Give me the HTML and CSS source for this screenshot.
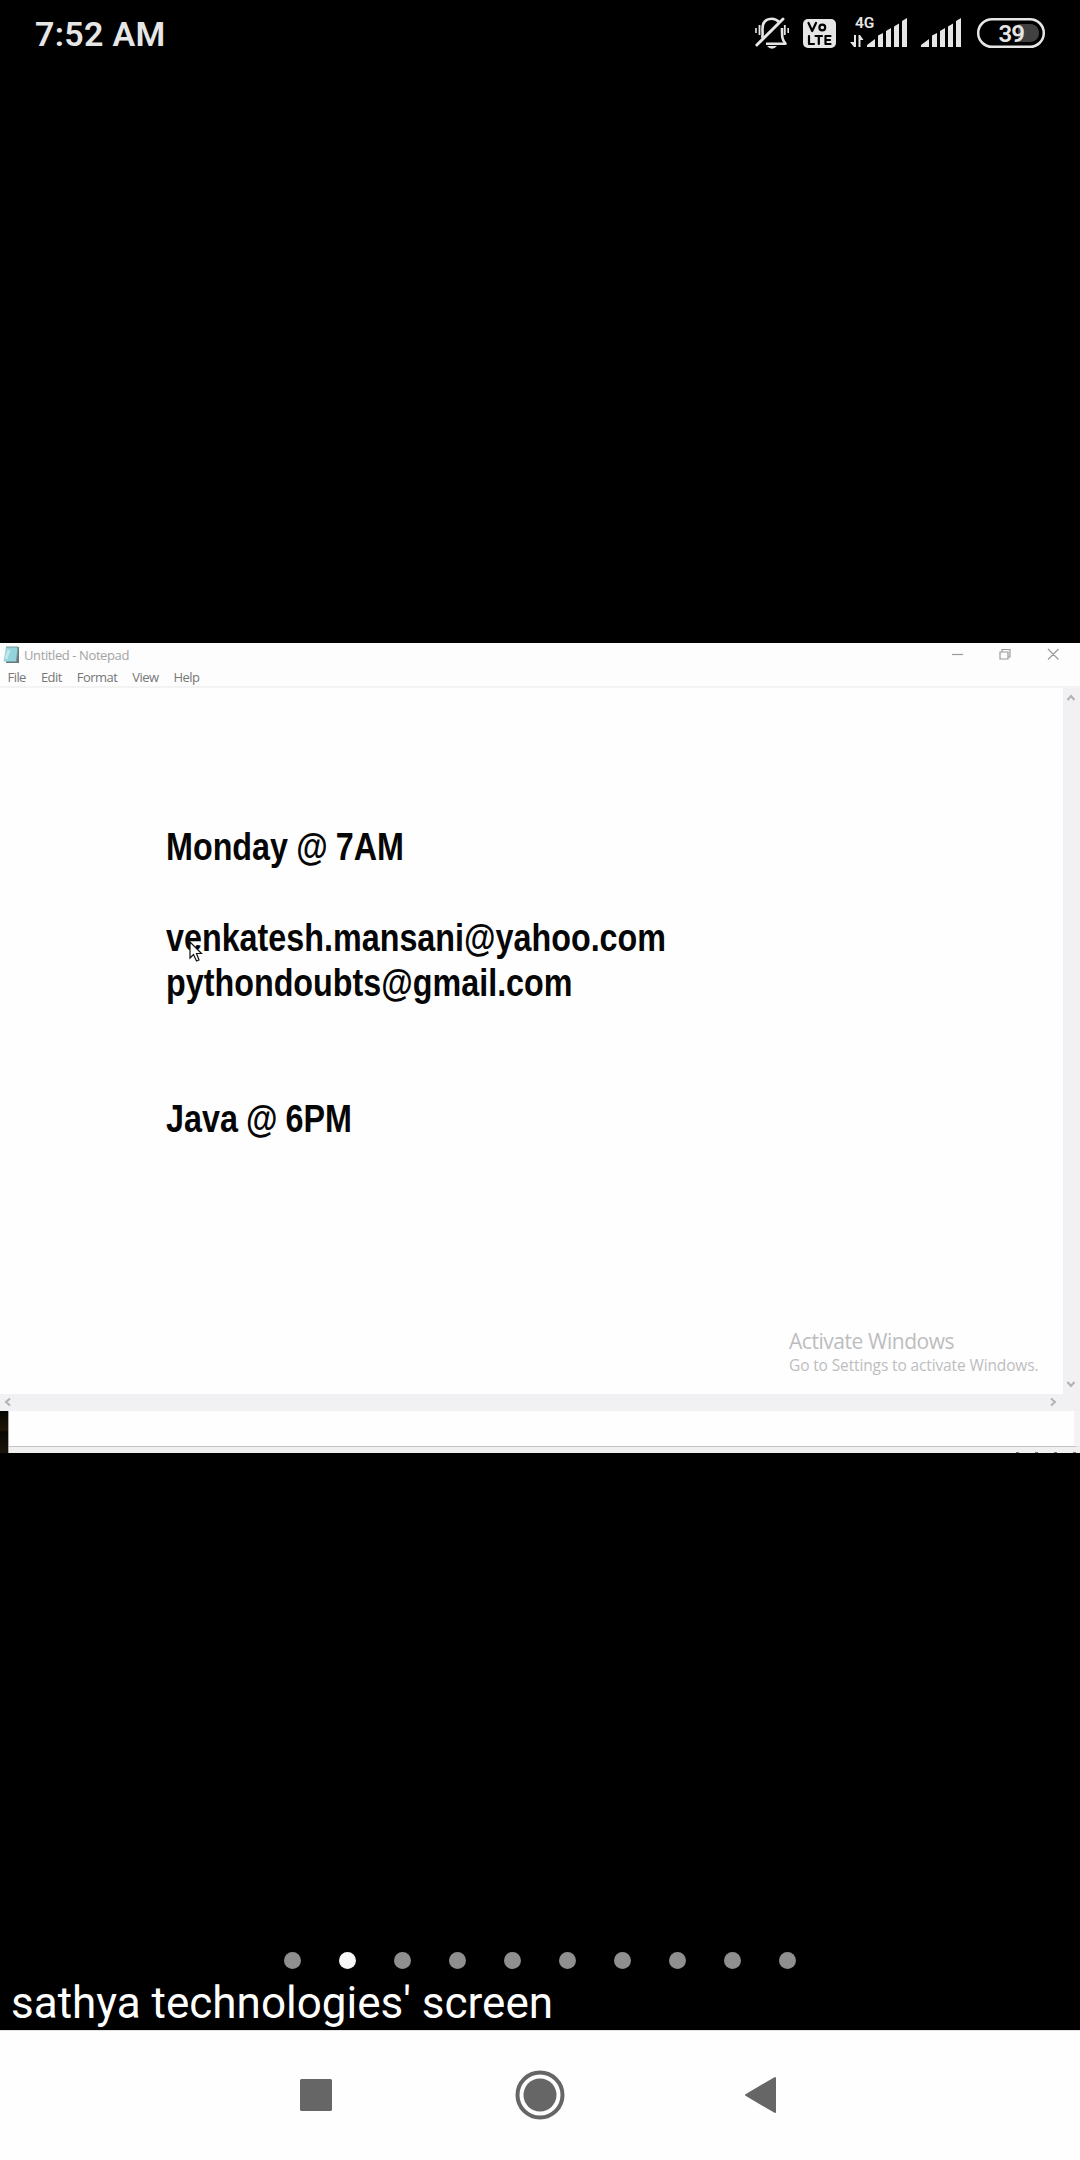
FILE: index.html
```html
<!DOCTYPE html>
<html lang="en">
<head>
<meta charset="utf-8">
<title>Screen share</title>
<link rel="stylesheet" href="styles.css">
</head>
<body>
<div class="phone">
  <header class="status">
    <span class="time">7:52 AM</span>
    <svg class="status-icons" width="300" height="50" viewBox="750 10 300 50" fill="#e6e6e6">
      <g fill="none" stroke="#e6e6e6" stroke-width="2.600">
        <path d="M762 38C763 36 762.500 33 762.500 29C762.500 22.500 766 18.800 772 18.800C775 18.800 777 20 779 22M766 43.700H785.500C782 40 782 37 782 28" stroke-linejoin="round"/>
        <path d="M756.800 45L783 19" stroke-width="2.900" stroke-linecap="round"/>
        <path d="M759.500 25V35M784.800 25V35" stroke-width="1.800"/>
        <path d="M756 28V33M788.200 28V33" stroke-width="1.600"/>
      </g>
      <path d="M767 46H777Q772 51.500 767 46Z"/>
      <rect x="803" y="19" width="33" height="29" rx="5"/>
      <g fill="none" stroke="#000" stroke-width="2.200" stroke-linecap="round" stroke-linejoin="round">
        <path d="M808.500 23L812.200 31L816 23"/><circle cx="822.300" cy="27.500" r="2.900"/>
        <path d="M809 36V44H814M815.500 36H822M818.800 36V44M830.500 36H825.500V44H830.500M825.500 40H830"/>
      </g>
      <text class="network" x="855" y="28">4G</text>
      <path d="M854 35H856V47H854L850 42H854ZM858.500 47V35H860L863.500 40H860.500V47Z"/>
      <g id="bars"><path d="M867 47V45L875 39V47ZM878 47V35.500L883 33V47ZM886 47V31L891 28V47ZM894 47V26.500L899 23.500V47ZM902 47V21L907 18V47Z"/></g>
      <use href="#bars" x="54"/>
      <path d="M1018 24H1030C1042 24 1042 42 1030 42H1018Z" fill="#414141"/>
      <rect x="978.200" y="19.200" width="65.600" height="27.600" rx="13.800" fill="none" stroke="#e6e6e6" stroke-width="2.500"/>
      <text class="charge" x="998.500" y="41.500">39</text>
    </svg>
  </header>

  <main class="share">
    <div class="titlebar">
      <svg width="18" height="20" viewBox="0 0 18 20"><path d="M6 2H17V18H4Z" fill="#68777a"/><path d="M4 2H16L14.500 16.500H1.500Z" fill="#94d3db"/><path d="M4 2H16M16 2L14.500 16" stroke="#77969c" fill="none"/><path d="M7 5L4 14" stroke="#c2e7ea" stroke-width="3"/></svg>
      <span class="caption">Untitled - Notepad</span>
      <svg class="window-buttons" width="112" height="14" viewBox="0 0 112 14" fill="none" stroke="#9b9b9b" stroke-width="1.200"><path d="M2 7.500H13" /><path d="M50 5H58V12H50ZM52 5V2.500H60V10H58M98 2L108.500 12.500M108.500 2L98 12.500"/></svg>
    </div>
    <nav class="menu"><span>File</span><span>Edit</span><span>Format</span><span>View</span><span>Help</span></nav>
    <div class="editor">
      <div class="page">
        <pre class="note">Monday @ 7AM

venkatesh.mansani@yahoo.com
pythondoubts@gmail.com


Java @ 6PM</pre>
        <div class="activate"><div class="activate-title">Activate Windows</div><div class="activate-hint">Go to Settings to activate Windows.</div></div>
        <svg class="cursor" width="14" height="22" viewBox="0 0 14 22"><path d="M1 1V17L4.500 13.500L7.500 20L10 19L7.500 12.500H12.500Z" fill="#fff" stroke="#111" stroke-width="1.200"/></svg>
      </div>
      <div class="vscroll">
        <svg width="10" height="8" viewBox="0 0 10 8"><path d="M1.500 6L5 2L8.500 6"/></svg>
        <svg width="10" height="8" viewBox="0 0 10 8"><path d="M1.500 2L5 6L8.500 2"/></svg>
      </div>
    </div>
    <div class="hscroll">
      <svg width="8" height="10" viewBox="0 0 8 10"><path d="M6 1.500L2 5L6 8.500"/></svg>
      <svg width="8" height="10" viewBox="0 0 8 10"><path d="M2 1.500L6 5L2 8.500"/></svg>
    </div>
    <div class="behind">
      <div class="desktop"></div>
      <div class="behind-window"><div class="behind-page"></div><div class="behind-status"><i></i><i></i><i></i><i></i></div></div>
    </div>
  </main>

  <div class="pager"><i></i><i class="current"></i><i></i><i></i><i></i><i></i><i></i><i></i><i></i><i></i></div>
  <div class="presenter"><span>sathya technologies' screen</span></div>
  <footer class="navbar">
    <svg width="34" height="34" viewBox="0 0 34 34"><rect x="1" y="1" width="32" height="32" rx="1.500"/></svg>
    <svg class="home" width="50" height="50" viewBox="0 0 50 50"><circle cx="25" cy="25" r="22.500" fill="none" stroke="#666" stroke-width="4"/><circle cx="25" cy="25" r="16.500"/></svg>
    <svg width="34" height="38" viewBox="0 0 34 38"><path d="M2 19L31 2V36Z" stroke="#666" stroke-width="2" stroke-linejoin="round"/></svg>
  </footer>
</div>
</body>
</html>
```

FILE: styles.css
```css
* { box-sizing: border-box; }
body { margin: 0; background: #000; }
svg { display: block; flex: none; }
.phone { width: 1080px; height: 2160px; display: flex; flex-direction: column; background: #000; overflow: hidden; }

.status { height: 643px; flex: none; display: flex; justify-content: space-between; align-items: flex-start; padding: 10px 30px 0 35px; color: #e6e6e6; font-family: Roboto, sans-serif; }
.time { font-size: 34px; font-weight: 600; line-height: 48px; letter-spacing: .3px; white-space: nowrap; }
.network { font: 600 15.500px Roboto, sans-serif; }
.charge { font: 600 24px Roboto, sans-serif; letter-spacing: -1px; }

.share { height: 810px; flex: none; background: #fdfdfd; font-family: "Open Sans", "Noto Sans", sans-serif; display: flex; flex-direction: column; }
.titlebar { height: 24px; display: flex; align-items: center; padding: 0 18px 0 2px; }
.caption { margin-left: 4px; font-size: 13px; letter-spacing: -.4px; color: #a3a3a3; white-space: nowrap; }
.window-buttons { margin-left: auto; margin-top: -2px; }
.menu { height: 21px; flex: none; padding-left: 7.500px; display: flex; gap: 15px; font-size: 13px; line-height: 21px; letter-spacing: -.55px; color: #777; border-bottom: 2px solid #f3f3f4; }
.editor { height: 706px; flex: none; display: flex; }
.page { flex: 1; position: relative; background: #fefefe; padding: 137px 0 0 166px; }
.note { margin: 0; font: bold 38px/45.400px "Liberation Sans", Arial, sans-serif; word-spacing: -1px; color: #060606; transform: scaleX(.85); transform-origin: 0 0; }
.cursor { position: absolute; left: 188.500px; top: 253px; }
.activate { position: absolute; left: 789px; top: 638.500px; color: #bdbdbf; white-space: nowrap; }
.activate-title { font-size: 21px; line-height: 28px; letter-spacing: -.45px; }
.activate-hint { font-size: 15.500px; line-height: 20px; letter-spacing: -.13px; }
.vscroll { width: 17px; background: #f1f0f2; display: flex; flex-direction: column; justify-content: space-between; align-items: center; padding: 6px 2px 6px 0; }
.vscroll svg, .hscroll svg { fill: none; stroke: #b2b2b4; stroke-width: 2; }
.hscroll { height: 17px; flex: none; background: #f1f0f2; display: flex; justify-content: space-between; align-items: center; padding: 0 23px 2px 4px; }
.behind { height: 42px; flex: none; display: flex; }
.desktop { width: 9px; background: linear-gradient(#060604, #211606 45%, #0b0703 50%, #19140a); border-right: 1px solid #aaa; }
.behind-window { flex: 1; display: flex; flex-direction: column; }
.behind-page { height: 36px; border-right: 6px solid #f3f2f4; border-bottom: 1px solid #c4c2c5; background: #fefefe; }
.behind-status { height: 6px; background: #f1f0f1; display: flex; gap: 16px; justify-content: flex-end; align-items: flex-end; padding-right: 4px; }
.behind-status i { width: 3px; height: 1px; background: #777; }

.pager { height: 17px; flex: none; margin: 499px 0 0; display: flex; justify-content: center; gap: 38px; }
.pager i { width: 17px; height: 17px; flex: none; border-radius: 50%; background: #8f8f8f; }
.pager .current { background: #f7f7f7; }
.presenter { flex: 1 1 0; min-height: 0; padding-left: 11px; color: #fff; font: 44px/68px Roboto, sans-serif; white-space: nowrap; }
.navbar { height: 130px; flex: none; background: #fefefe; display: flex; align-items: center; justify-content: space-between; padding: 0 302px 1px 299px; fill: #666; border-top: 1px solid #e6dfe6; }
.home { margin-left: 3px; }
```
